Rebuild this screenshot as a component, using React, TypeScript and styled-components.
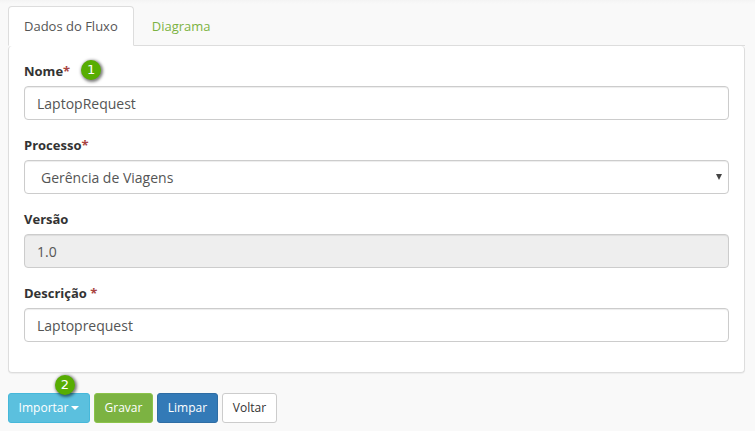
import React from "react";
import styled, { createGlobalStyle, css } from "styled-components";

const GlobalStyle = createGlobalStyle`
  * { box-sizing: border-box; }
  body {
    margin: 0;
    background: #f9f9f9;
    color: #333;
    font: 13px/20px "Open Sans", sans-serif;
  }
`;

const Page = styled.main`
  height: 431px;
  overflow: hidden;
  padding: 6px 10px 0 8px;
  background: linear-gradient(#f4f4f4, #f9f9f9 4px);
`;

const Tabs = styled.nav`
  display: flex;
  height: 40px;
  border-bottom: 1px solid #ddd;
`;

const Tab = styled.a<{ $active?: boolean }>`
  height: 40px;
  margin-right: 2px;
  padding: 9px 15px;
  border: 1px solid transparent;
  border-radius: 4px 4px 0 0;
  color: #7cb342;
  white-space: nowrap;
  ${(p) =>
    p.$active &&
    css`
      border-color: #ddd #ddd transparent;
      background: #fff;
      color: #555;
    `}
`;

const Panel = styled.form`
  height: 327px;
  padding: 15px;
  border: 1px solid #ddd;
  border-top: 0;
  border-radius: 4px;
  background: #fff;
  box-shadow: 0 1px 1px rgba(0, 0, 0, 0.05);
`;

const Field = styled.div`
  height: 74px;
`;

const Label = styled.label`
  display: flex;
  height: 25px;
  font-weight: 700;
`;

const Required = styled.span`
  color: #a94442;
`;

const controlBox = css`
  display: block;
  width: 100%;
  height: 34px;
  padding: 6px 12px;
  border: 1px solid #ccc;
  border-radius: 4px;
  background: #fff;
  box-shadow: inset 0 1px 1px rgba(0, 0, 0, 0.075);
  color: #555;
  font: 14px/20px "Open Sans", sans-serif;
`;

const Input = styled.input`
  ${controlBox}
  &:read-only { background: #eee; }
`;

const SelectBox = styled.div`
  ${controlBox}
  display: flex;
  justify-content: space-between;
  padding: 7px 6px 5px 16px;
`;

const Arrow = styled.svg`
  display: block;
  width: 6px;
  height: 6px;
  margin-top: 6px;
  fill: #444;
`;

const badge = css`
  display: flex;
  align-items: center;
  justify-content: center;
  width: 20px;
  height: 20px;
  border-radius: 50%;
  background: #57ad02;
  box-shadow: 1px 1px 3px 1px rgba(0, 0, 0, 0.5);
  color: #fff;
  font: 13px/20px "DejaVu Sans", sans-serif;
`;

const LabelBadge = styled.span`
  ${badge}
  margin: -1px 0 0 11px;
`;

const ButtonBadge = styled.span`
  ${badge}
  position: absolute;
  left: 46px;
  top: -19px;
`;

const Actions = styled.div`
  display: flex;
  gap: 4px;
  margin-top: 20px;
`;

const tones = {
  info: ["#5bc0de", "#46b8da", "#fff"],
  success: ["#7cb342", "#8bc34a", "#fff"],
  primary: ["#337ab7", "#2e6da4", "#fff"],
  plain: ["#fff", "#ccc", "#333"],
};

const Button = styled.button<{ $tone: keyof typeof tones; $width: number }>`
  position: relative;
  display: flex;
  align-items: center;
  justify-content: center;
  width: ${(p) => p.$width}px;
  height: 30px;
  padding: 0;
  border: 1px solid ${(p) => tones[p.$tone][1]};
  border-radius: 3px;
  background: ${(p) => tones[p.$tone][0]};
  color: ${(p) => tones[p.$tone][2]};
  font: 12px/18px "Open Sans", sans-serif;
`;

const Caret = styled.svg`
  width: 8px;
  height: 4px;
  margin-left: 3px;
  fill: #fff;
`;

export default function App() {
  return (
    <>
      <GlobalStyle />
      <Page>
        <Tabs>
          <Tab $active>Dados do Fluxo</Tab>
          <Tab>Diagrama</Tab>
        </Tabs>
        <Panel>
          <Field>
            <Label>
              Nome<Required>*</Required>
              <LabelBadge>1</LabelBadge>
            </Label>
            <Input defaultValue="LaptopRequest" />
          </Field>
          <Field>
            <Label>
              Processo<Required>*</Required>
            </Label>
            <SelectBox role="combobox">
              Gerência de Viagens
              <Arrow viewBox="0 0 6 6">
                <path d="M0 0h6L3 6z" />
              </Arrow>
            </SelectBox>
          </Field>
          <Field>
            <Label>Versão</Label>
            <Input readOnly value="1.0" />
          </Field>
          <Field>
            <Label>
              Descrição&nbsp;<Required>*</Required>
            </Label>
            <Input defaultValue="Laptoprequest" />
          </Field>
        </Panel>
        <Actions>
          <Button $tone="info" $width={82}>
            Importar
            <Caret viewBox="0 0 8 4">
              <path d="M0 0h8L4 4z" />
            </Caret>
            <ButtonBadge>2</ButtonBadge>
          </Button>
          <Button $tone="success" $width={59}>Gravar</Button>
          <Button $tone="primary" $width={61}>Limpar</Button>
          <Button $tone="plain" $width={55}>Voltar</Button>
        </Actions>
      </Page>
    </>
  );
}
